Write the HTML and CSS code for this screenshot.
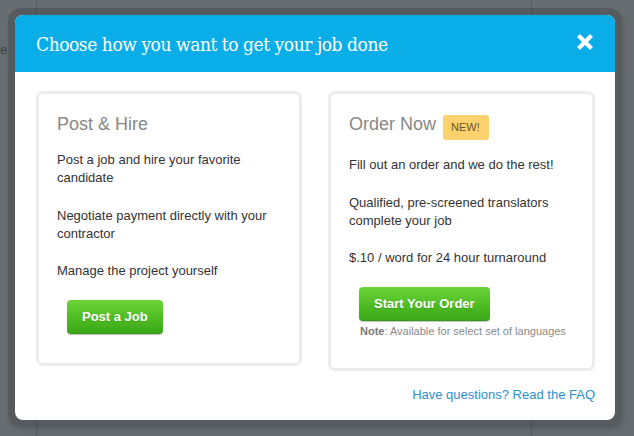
FILE: index.html
```html
<!DOCTYPE html>
<html lang="en">
<head>
<meta charset="utf-8">
<title>Choose how you want to get your job done</title>
<link rel="stylesheet" href="styles.css">
</head>
<body>
<span class="bg-text">e</span>
<div class="overlay">
  <div class="modal">
    <div class="modal-header">
      <h1 class="modal-title">Choose how you want to get your job done</h1>
      <svg class="close" width="18" height="18" viewBox="0 0 18 18" aria-label="Close">
        <path d="M2.5 2.5 L15.5 15.5 M15.5 2.5 L2.5 15.5" stroke="#fff" stroke-width="4.2" stroke-linecap="butt" fill="none"/>
      </svg>
    </div>
    <div class="modal-body">
      <div class="cards">
        <div class="card">
          <h2 class="card-title">Post &amp; Hire</h2>
          <p class="card-text">Post a job and hire your favorite candidate</p>
          <p class="card-text">Negotiate payment directly with your contractor</p>
          <p class="card-text">Manage the project yourself</p>
          <div class="action"><span class="btn">Post a Job</span></div>
        </div>
        <div class="card">
          <h2 class="card-title">Order Now<span class="badge">NEW!</span></h2>
          <p class="card-text">Fill out an order and we do the rest!</p>
          <p class="card-text">Qualified, pre-screened translators complete your job</p>
          <p class="card-text">$.10 / word for 24 hour turnaround</p>
          <div class="action"><span class="btn">Start Your Order</span></div>
          <p class="note"><b>Note</b>: Available for select set of languages</p>
        </div>
      </div>
      <div class="faq"><a class="faq-link">Have questions? Read the FAQ</a></div>
    </div>
  </div>
</div>
</body>
</html>
```

FILE: styles.css
```css
html, body {
  margin: 0;
  padding: 0;
}
body {
  width: 634px;
  height: 436px;
  overflow: hidden;
  background-color: #666d70;
  background-image:
    linear-gradient(to right, transparent 36px, #575e61 36px, #575e61 37px, transparent 37px),
    linear-gradient(to right, transparent 531px, #575e61 531px, #575e61 532px, transparent 532px);
  font-family: "Liberation Sans", Arial, sans-serif;
  position: relative;
}
.bg-text {
  position: absolute;
  left: 0;
  top: 42px;
  font-size: 13px;
  color: #3c4244;
}
.overlay {
  margin: 8px 0 0 8px;
  width: 600px;
  padding: 7px;
  border-radius: 13px;
  background: rgba(0, 0, 0, 0.16);
  box-shadow: 2px 3px 4px rgba(0, 0, 0, 0.12);
}
.modal {
  background: #fff;
  border-radius: 8px;
  overflow: hidden;
}
.modal-header {
  height: 57px;
  background: #09aee8;
  display: flex;
  align-items: flex-start;
  justify-content: space-between;
  padding: 0 21px 0 22px;
  box-sizing: border-box;
}
.modal-title {
  margin: 18px 0 0 -1px;
  font-family: "DejaVu Serif Condensed", "DejaVu Serif", serif;
  font-stretch: condensed;
  font-weight: normal;
  font-size: 19px;
  line-height: 22px;
  letter-spacing: -0.45px;
  color: #fff;
}
.close {
  display: block;
  margin-top: 18px;
}
.modal-body {
  padding: 19px 20px 16px 21px;
}
.cards {
  display: grid;
  grid-template-columns: 266px 267px;
  column-gap: 26px;
  align-items: start;
}
.card {
  border: 3px solid #ececec;
  border-radius: 7px;
  padding: 19px 18px 29px 18px;
}
.card-title {
  margin: 0 0 16px 0;
  font-size: 18px;
  line-height: 22px;
  font-weight: normal;
  color: #888;
}
.badge {
  display: inline-block;
  margin-left: 7px;
  padding: 5px 9px 5px 8px;
  font-size: 11px;
  line-height: 15px;
  color: #6a5428;
  background: #fdd26d;
  border-radius: 3px;
  vertical-align: -1px;
}
.card-text {
  margin: 0 0 19.5px 0;
  font-size: 13px;
  line-height: 18px;
  color: #333;
}
.action {
  display: flex;
  padding-left: 10px;
}
.btn {
  display: block;
  height: 34px;
  line-height: 34px;
  padding: 0 15px;
  border-radius: 4px;
  background: linear-gradient(to bottom, #6dd43a 0%, #4dbb22 55%, #3aa518 100%);
  box-shadow: 0 1px 1px rgba(0, 0, 0, 0.25), inset 0 -1px 0 rgba(0, 0, 0, 0.08);
  color: #fff;
  font-size: 13px;
  font-weight: bold;
  text-shadow: 0 1px 0 rgba(0, 0, 0, 0.15);
}
.note {
  margin: 3px 0 1px 11px;
  font-size: 11px;
  line-height: 14px;
  color: #8a8a8a;
}
.note b {
  color: #777;
}
.faq {
  margin-top: 15px;
  text-align: right;
  font-size: 13px;
  line-height: 18px;
}
.faq-link {
  color: #2b8fd2;
  text-decoration: none;
}
```
